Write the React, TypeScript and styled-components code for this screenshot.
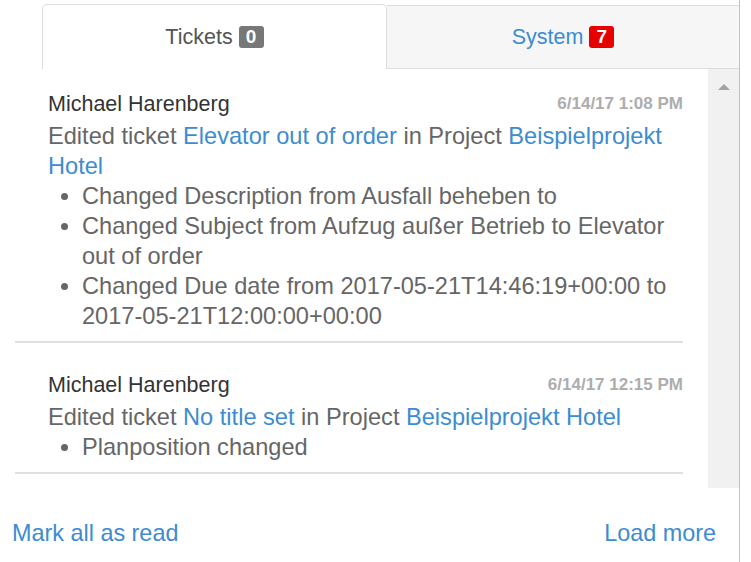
import React from "react";
import styled, { createGlobalStyle } from "styled-components";

const colors = {
  text: "#666666",
  dark: "#333333",
  muted: "#adadad",
  link: "#3d8cd0",
  border: "#dddddd",
  tabBg: "#f6f6f6",
  scroll: "#f1f1f1",
};

interface IChange {
  label?: string;
  field?: string;
  from?: string;
  to?: string;
}

interface IActivity {
  author: string;
  time: string;
  ticket: string;
  project: string;
  changes: IChange[];
}

const activities: IActivity[] = [
  {
    author: "Michael Harenberg",
    time: "6/14/17 1:08 PM",
    ticket: "Elevator out of order",
    project: "Beispielprojekt Hotel",
    changes: [
      { field: "Description", from: "Ausfall beheben", to: "" },
      { field: "Subject", from: "Aufzug außer Betrieb", to: "Elevator out of order" },
      {
        field: "Due date",
        from: "2017-05-21T14:46:19+00:00",
        to: "2017-05-21T12:00:00+00:00",
      },
    ],
  },
  {
    author: "Michael Harenberg",
    time: "6/14/17 12:15 PM",
    ticket: "No title set",
    project: "Beispielprojekt Hotel",
    changes: [{ label: "Planposition changed" }],
  },
];

const GlobalStyle = createGlobalStyle`
  html, body {
    margin: 0;
    padding: 0;
    background: #ffffff;
    font-family: "Liberation Sans", Arial, Helvetica, sans-serif;
  }
`;

export default function App() {
  return (
    <>
      <GlobalStyle />
      <Panel>
        <TabBar>
          <Tab active>
            Tickets <Badge bgColor="#777777">0</Badge>
          </Tab>
          <Tab>
            System <Badge bgColor="#e60000">7</Badge>
          </Tab>
        </TabBar>
        <Body>
          <List>
            {activities.map((activity, index) => (
              <Item key={index}>
                <div className="item-head">
                  <span className="item-author">{activity.author}</span>
                  <span className="item-time">{activity.time}</span>
                </div>
                <div className="item-summary">
                  Edited ticket <Link>{activity.ticket}</Link> in Project{" "}
                  <Link>{activity.project}</Link>
                </div>
                <ul className="item-changes">
                  {activity.changes.map((change, i) =>
                    change.label ? (
                      <li key={i}>{change.label}</li>
                    ) : (
                      <li key={i}>
                        Changed {change.field} from {change.from} to {change.to}
                      </li>
                    )
                  )}
                </ul>
              </Item>
            ))}
          </List>
          <Scrollbar>
            <div className="scroll-arrow" />
          </Scrollbar>
        </Body>
        <Footer>
          <Link>Mark all as read</Link>
          <Link>Load more</Link>
        </Footer>
      </Panel>
    </>
  );
}

const Panel = styled.div`
  width: 739px;
  height: 562px;
  border-right: 1px solid #c4c4c4;
  display: flex;
  flex-direction: column;
  box-sizing: content-box;
`;

const TabBar = styled.div`
  display: flex;
  padding: 4px 0 0 42px;
  height: 69px;
  box-sizing: border-box;
`;

const Tab = styled.div<{ active?: boolean }>`
  display: flex;
  align-items: center;
  justify-content: center;
  gap: 6px;
  font-size: 21.5px;
  box-sizing: border-box;
  ${(props) =>
    props.active
      ? `
    width: 345px;
    color: #555555;
    background: #ffffff;
    border: 1px solid ${colors.border};
    border-bottom: none;
    border-radius: 5px 5px 0 0;
  `
      : `
    flex: 1;
    color: ${colors.link};
    background: ${colors.tabBg};
    border-top: 1px solid ${colors.border};
    border-bottom: 1px solid ${colors.border};
    margin-top: 1px;
  `}
`;

const Badge = styled.span<{ bgColor: string }>`
  display: inline-flex;
  align-items: center;
  justify-content: center;
  min-width: 25px;
  height: 22px;
  padding: 0 4px;
  box-sizing: border-box;
  border-radius: 3px;
  background-color: ${(props) => props.bgColor};
  color: #ffffff;
  font-weight: bold;
  font-size: 19px;
`;

const Body = styled.div`
  display: flex;
  height: 419px;
`;

const List = styled.div`
  flex: 1;
  padding: 0 25px 0 15px;
  overflow: hidden;
`;

const Item = styled.div`
  padding: 27px 0 10px 33px;
  border-bottom: 2px solid #e0e0e0;
  color: ${colors.text};
  font-size: 23.6px;
  line-height: 30px;

  &:first-child {
    padding-top: 20px;
  }

  .item-head {
    display: flex;
    justify-content: space-between;
    align-items: center;
    margin-bottom: 2px;
  }
  .item-author {
    color: ${colors.dark};
    font-size: 21.5px;
  }
  .item-time {
    color: ${colors.muted};
    font-size: 17px;
    font-weight: bold;
  }
  .item-changes {
    margin: 0;
    padding-left: 34px;
    list-style: disc;
  }
`;

const Link = styled.span`
  color: ${colors.link};
  cursor: pointer;
`;

const Scrollbar = styled.div`
  width: 31px;
  background: ${colors.scroll};
  display: flex;
  justify-content: center;
  padding-top: 15px;
  box-sizing: border-box;

  .scroll-arrow {
    width: 0;
    height: 0;
    border-left: 6px solid transparent;
    border-right: 6px solid transparent;
    border-bottom: 6px solid #a3a3a3;
  }
`;

const Footer = styled.div`
  flex: 1;
  display: flex;
  justify-content: space-between;
  align-items: flex-start;
  padding: 30px 23px 0 12px;
  font-size: 23.4px;
  line-height: 30px;
`;
